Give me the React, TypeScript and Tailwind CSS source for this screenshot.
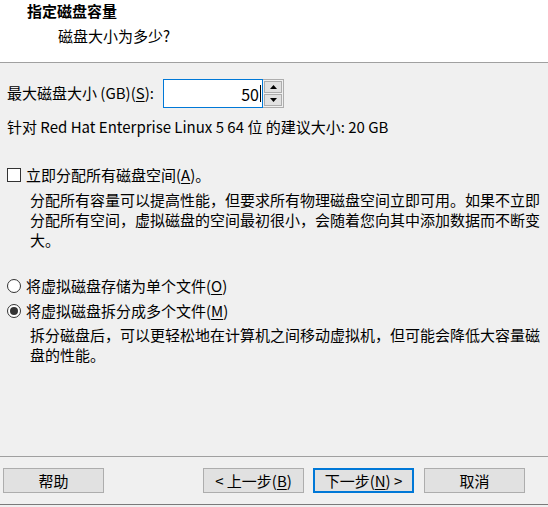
const U = ({ c }: { c: string }) => <span className="underline underline-offset-2">{c}</span>;

const Button = ({ children, primary, className = "" }: { children: React.ReactNode; primary?: boolean; className?: string }) => (
  <div
    className={`h-[25px] w-[101px] shrink-0 flex items-center justify-center bg-[#e1e1e1] text-[15px] leading-none ${
      primary ? "border-2 border-[#0078d7]" : "border border-[#adadad]"
    } ${className}`}
  >
    <span className="whitespace-pre">{children}</span>
  </div>
);

export default function App() {
  return (
    <div
      className="w-[548px] h-[507px] bg-[#f0f0f0] flex flex-col overflow-hidden text-black"
      style={{ fontFamily: '"Noto Sans CJK SC", "Noto Sans", sans-serif' }}
    >
      {/* header */}
      <div className="h-[63px] shrink-0 bg-white border-b border-[#a0a0a0] pl-[27px] pt-[1px]">
        <div className="text-[15px] font-bold leading-[20px]">指定磁盘容量</div>
        <div className="text-[15px] leading-[20px] pl-[31px] mt-[5px]">磁盘大小为多少?</div>
      </div>

      {/* content */}
      <div className="flex-1 px-[7px] text-[15px]">
        <div className="mt-[16px] flex items-center h-[29px]">
          <span className="w-[156px] shrink-0 whitespace-nowrap">
            最大磁盘大小 (GB)(<U c="S" />):
          </span>
          <div className="w-[100px] h-[29px] shrink-0 bg-white border border-[#0078d7] flex items-center justify-end pr-[1px] text-[16px]">
            <span>50</span>
            <span className="w-px h-[17px] bg-black ml-[1px]" />
          </div>
          <div className="w-[21px] h-[29px] shrink-0 flex flex-col border border-[#adadad] border-l-0 bg-[#f0f0f0]">
            <div className="flex-1 flex items-center justify-center bg-[#e1e1e1] border border-[#adadad] m-[1px] mb-0">
              <svg width="7" height="4" viewBox="0 0 7 4"><path d="M0 4 L3.5 0 L7 4 Z" fill="#000" /></svg>
            </div>
            <div className="flex-1 flex items-center justify-center bg-[#e1e1e1] border border-[#adadad] m-[1px]">
              <svg width="7" height="4" viewBox="0 0 7 4"><path d="M0 0 L3.5 4 L7 0 Z" fill="#000" /></svg>
            </div>
          </div>
        </div>

        <div className="mt-[9px] leading-[20px] whitespace-nowrap">
          针对 Red Hat Enterprise Linux 5 64 位 的建议大小: 20 GB
        </div>

        <div className="mt-[28px] flex items-center h-[20px] gap-[5px]">
          <div className="w-[14px] h-[14px] shrink-0 border border-[#333] bg-white" />
          <span className="whitespace-nowrap">
            立即分配所有磁盘空间(<U c="A" />)。
          </span>
        </div>
        <div className="mt-[5px] pl-[23px] leading-[20px] whitespace-nowrap">
          <div>分配所有容量可以提高性能，但要求所有物理磁盘空间立即可用。如果不立即</div>
          <div>分配所有空间，虚拟磁盘的空间最初很小，会随着您向其中添加数据而不断变</div>
          <div>大。</div>
        </div>

        <div className="mt-[26px] flex items-center h-[20px] gap-[5px]">
          <div className="w-[14px] h-[14px] shrink-0 rounded-full border border-[#333] bg-white" />
          <span className="whitespace-nowrap">
            将虚拟磁盘存储为单个文件(<U c="O" />)
          </span>
        </div>
        <div className="mt-[5px] flex items-center h-[20px] gap-[5px]">
          <div className="w-[14px] h-[14px] shrink-0 rounded-full border border-[#333] bg-white flex items-center justify-center">
            <div className="w-[8px] h-[8px] rounded-full bg-[#333]" />
          </div>
          <span className="whitespace-nowrap">
            将虚拟磁盘拆分成多个文件(<U c="M" />)
          </span>
        </div>
        <div className="mt-[4px] pl-[23px] leading-[20px] whitespace-nowrap">
          <div>拆分磁盘后，可以更轻松地在计算机之间移动虚拟机，但可能会降低大容量磁</div>
          <div>盘的性能。</div>
        </div>
      </div>

      {/* footer */}
      <div className="h-[51px] shrink-0 border-t border-[#a0a0a0] flex flex-col">
        <div className="mt-[11px] flex items-center pl-[3px]">
          <Button>帮助</Button>
          <Button className="ml-[99px]">
            &lt; 上一步(<U c="B" />)
          </Button>
          <Button primary className="ml-[9px]">
            下一步(<U c="N" />) &gt;
          </Button>
          <Button className="ml-[10px]">取消</Button>
        </div>
        <div className="mt-auto h-[3px] border-t border-[#7a7a7a] bg-[#f0f0f0]" />
      </div>
    </div>
  );
}
